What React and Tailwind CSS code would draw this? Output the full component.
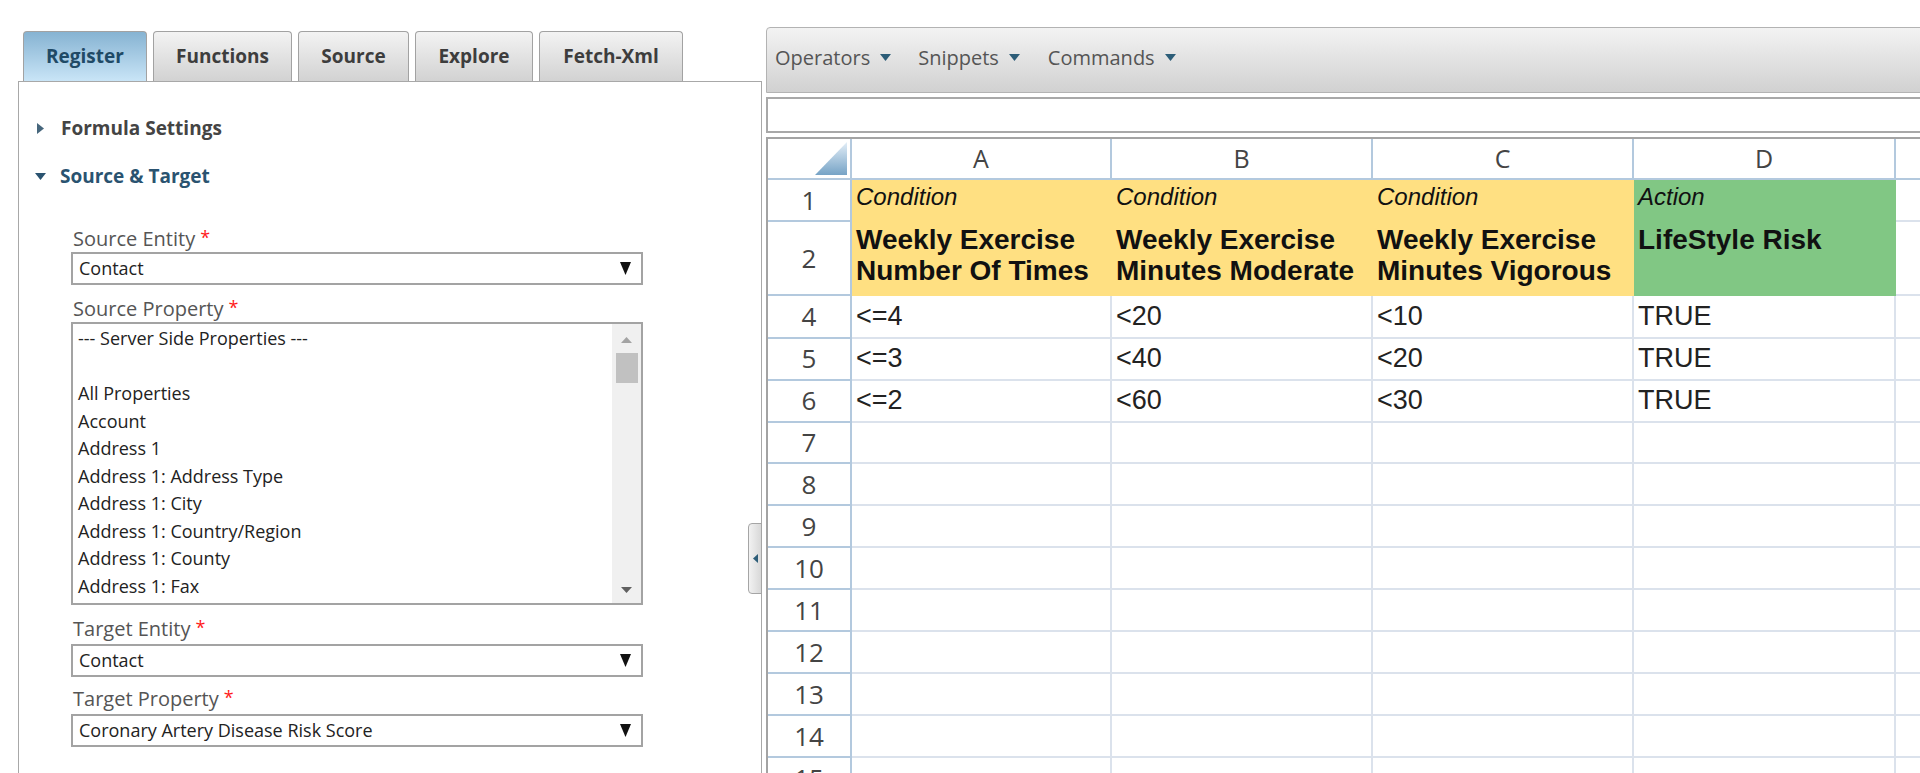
import React from "react";

const Caret = ({ className = "" }) => (
  <svg width="11" height="7" viewBox="0 0 11 7" className={className}>
    <polygon points="0,0 11,0 5.5,7" fill="#2c5d78" />
  </svg>
);

const SelectArrow = () => (
  <svg width="11" height="13" viewBox="0 0 11 13">
    <polygon points="0,0 11,0 5.5,13" fill="#111" />
  </svg>
);

const Label = ({ children, className = "" }) => (
  <div className={"h-[26px] leading-[26px] text-[20px] text-[#555] pl-[2px] " + className}>
    {children}
    <span className="text-[#ff1a1a] text-[18px] ml-[5px] align-top leading-[22px]">*</span>
  </div>
);

const Select = ({ value, className = "" }) => (
  <div
    className={
      "h-[33px] w-[572px] shrink-0 border-2 border-[#a3a3a3] bg-white flex items-center justify-between pl-[6px] pr-[10px] text-[18px] text-[#222] " +
      className
    }
  >
    <span>{value}</span>
    <SelectArrow />
  </div>
);

const listItems = [
  "--- Server Side Properties ---",
  "",
  "All Properties",
  "Account",
  "Address 1",
  "Address 1: Address Type",
  "Address 1: City",
  "Address 1: Country/Region",
  "Address 1: County",
  "Address 1: Fax",
];

const tabs = [
  { name: "Register", w: "w-[124px]", active: true },
  { name: "Functions", w: "w-[139px]" },
  { name: "Source", w: "w-[111px]" },
  { name: "Explore", w: "w-[118px]" },
  { name: "Fetch-Xml", w: "w-[144px]" },
];

const GRID = "grid grid-cols-[84px_260px_261px_261px_262px_240px]";

const Y = "bg-[#ffe082] border-[#ffe082]";
const G = "bg-[#81c784] border-[#81c784]";

const dataRows = [
  { n: 4, v: ["<=4", "<20", "<10", "TRUE"] },
  { n: 5, v: ["<=3", "<40", "<20", "TRUE"] },
  { n: 6, v: ["<=2", "<60", "<30", "TRUE"] },
  { n: 7, v: ["", "", "", ""] },
  { n: 8, v: ["", "", "", ""] },
  { n: 9, v: ["", "", "", ""] },
  { n: 10, v: ["", "", "", ""] },
  { n: 11, v: ["", "", "", ""] },
  { n: 12, v: ["", "", "", ""] },
  { n: 13, v: ["", "", "", ""] },
  { n: 14, v: ["", "", "", ""] },
  { n: 15, v: ["", "", "", ""] },
];

const RowHead = ({ n }) => (
  <div className="border-r-2 border-b-2 border-r-[#b3c9de] border-b-[#b3c9de] flex items-center justify-center text-[26px] text-[#444] font-['Open_Sans',sans-serif]">
    {n}
  </div>
);

export default function App() {
  return (
    <div className="w-[1920px] h-[773px] overflow-hidden bg-white flex font-['Open_Sans',sans-serif]">
      {/* Left column */}
      <div className="relative w-[762px] shrink-0 pl-[18px] pt-[31px] flex flex-col">
        <div className="flex gap-[6px] pl-[5px] h-[50px] shrink-0">
          {tabs.map((t) => (
            <div
              key={t.name}
              className={
                "h-[50px] rounded-t-[4px] border border-b-0 border-[#a2a2a2] flex items-center justify-center text-[19px] font-bold " +
                t.w +
                " " +
                (t.active
                  ? "bg-gradient-to-b from-[#86b3d2] to-[#c9e5f7] text-[#1f4a66]"
                  : "bg-gradient-to-b from-[#f3f3f3] to-[#d2d2d2] text-[#3d3d3d]")
              }
            >
              {t.name}
            </div>
          ))}
        </div>
        <div className="flex-1 border-l border-t border-r border-[#a8a8a8] pt-[32px]">
          <div className="flex items-center h-[28px] pl-[18px]">
            <svg width="7" height="11" viewBox="0 0 7 11" className="mr-[17px]">
              <polygon points="0,0 7,5.5 0,11" fill="#46667c" />
            </svg>
            <span className="text-[19px] font-bold text-[#444]">Formula Settings</span>
          </div>
          <div className="flex items-center h-[28px] pl-[16px] mt-[20px]">
            <svg width="11" height="7" viewBox="0 0 11 7" className="mr-[14px]">
              <polygon points="0,0 11,0 5.5,7" fill="#2a5370" />
            </svg>
            <span className="text-[19px] font-bold text-[#2a5370]">Source &amp; Target</span>
          </div>

          <div className="pl-[52px] mt-[36px] flex flex-col">
            <Label>Source Entity</Label>
            <Select value="Contact" />
            <Label className="mt-[11px]">Source Property</Label>
            <div className="h-[283px] w-[572px] shrink-0 border-2 border-[#a3a3a3] flex">
              <div className="flex-1 pl-[5px] pt-[1px] text-[18px] text-[#222] leading-[27.5px]">
                {listItems.map((it, i) => (
                  <div key={i} className="h-[27.5px] whitespace-nowrap">
                    {it}
                  </div>
                ))}
              </div>
              <div className="w-[29px] bg-[#f0f0f0] flex flex-col items-center pt-[13px] pb-[10px]">
                <svg width="11" height="6" viewBox="0 0 11 6">
                  <polygon points="0,6 11,6 5.5,0" fill="#a3a3a3" />
                </svg>
                <div className="w-[22px] h-[30px] bg-[#c1c1c1] mt-[10px]" />
                <div className="flex-1" />
                <svg width="11" height="6" viewBox="0 0 11 6">
                  <polygon points="0,0 11,0 5.5,6" fill="#606060" />
                </svg>
              </div>
            </div>
            <Label className="mt-[11px] mb-[2px]">Target Entity</Label>
            <Select value="Contact" />
            <Label className="mt-[9px] mb-[2px]">Target Property</Label>
            <Select value="Coronary Artery Disease Risk Score" />
          </div>
        </div>

        {/* collapse handle */}
        <div className="absolute left-[748px] top-[523px] w-[14px] h-[71px] rounded-l-[4px] border border-[#a5a5a5] bg-gradient-to-r from-[#f2f2f2] to-[#d8d8d8] flex items-center justify-center">
          <svg width="5" height="9" viewBox="0 0 5 9">
            <polygon points="5,0 5,9 0,4.5" fill="#2c5d78" />
          </svg>
        </div>
      </div>

      {/* Right column */}
      <div className="w-[1200px] shrink-0 ml-[4px] pt-[27px] flex flex-col">
        <div className="h-[66px] shrink-0 rounded-tl-[4px] border border-[#b3b3b3] bg-gradient-to-b from-[#f3f3f3] to-[#d1d1d1] flex items-center pl-[8px] pb-[5px] text-[20px] text-[#555]">
          <span>Operators</span>
          <Caret className="ml-[10px]" />
          <span className="ml-[27px]">Snippets</span>
          <Caret className="ml-[10px]" />
          <span className="ml-[28px]">Commands</span>
          <Caret className="ml-[10px]" />
        </div>
        <div className="h-[36px] shrink-0 mt-[4px] border-2 border-[#a8a8a8] bg-white" />

        <div className="shrink-0 mt-[4px] border-l-2 border-t-2 border-[#a3a3a3] font-['Liberation_Sans',Arial,sans-serif]">
          {/* header */}
          <div className={GRID + " h-[41px]"}>
            <div className="relative border-r-2 border-b-2 border-[#b3c9de]">
              <svg
                width="32"
                height="33"
                viewBox="0 0 32 33"
                className="absolute right-[3px] bottom-[3px]"
              >
                <defs>
                  <linearGradient id="cg" x1="0" y1="0" x2="0" y2="1">
                    <stop offset="0" stopColor="#e3eef7" />
                    <stop offset="1" stopColor="#76a3c6" />
                  </linearGradient>
                </defs>
                <polygon points="32,0 32,33 0,33" fill="url(#cg)" />
              </svg>
            </div>
            {["A", "B", "C", "D", ""].map((c, i) => (
              <div
                key={i}
                className="border-r-2 border-b-2 border-[#b3c9de] flex items-center justify-center text-[25px] text-[#444] font-['Open_Sans',sans-serif]"
              >
                {c}
              </div>
            ))}
          </div>

          {/* row 1 */}
          <div className={GRID + " h-[42px]"}>
            <RowHead n={1} />
            {["Condition", "Condition", "Condition"].map((t, i) => (
              <div key={i} className={"border-r-2 border-b-2 pl-[4px] pt-[3px] italic text-[24px] leading-[28px] text-[#111] " + Y}>
                {t}
              </div>
            ))}
            <div className={"border-r-2 border-b-2 pl-[4px] pt-[3px] italic text-[24px] leading-[28px] text-[#111] " + G}>
              Action
            </div>
            <div className="border-r-2 border-b-2 border-[#dbe2ec]" />
          </div>

          {/* row 2 */}
          <div className={GRID + " h-[74px]"}>
            <RowHead n={2} />
            {[
              ["Weekly Exercise", "Number Of Times"],
              ["Weekly Exercise", "Minutes Moderate"],
              ["Weekly Exercise", "Minutes Vigorous"],
            ].map((t, i) => (
              <div key={i} className={"border-r-2 border-b-2 pl-[4px] pt-[2px] font-bold text-[28px] leading-[31px] text-[#111] whitespace-nowrap " + Y}>
                <div>{t[0]}</div>
                <div>{t[1]}</div>
              </div>
            ))}
            <div className={"border-r-2 border-b-2 pl-[4px] pt-[2px] font-bold text-[28px] leading-[31px] text-[#111] " + G}>
              LifeStyle Risk
            </div>
            <div className="border-r-2 border-b-2 border-[#dbe2ec]" />
          </div>

          {dataRows.map((r) => (
            <div key={r.n} className={GRID + " h-[42px]"}>
              <RowHead n={r.n} />
              {r.v.map((v, i) => (
                <div
                  key={i}
                  className="border-r-2 border-b-2 border-[#dbe2ec] pl-[4px] flex items-center text-[27px] text-[#222]"
                >
                  {v}
                </div>
              ))}
              <div className="border-r-2 border-b-2 border-[#dbe2ec]" />
            </div>
          ))}
        </div>
      </div>
    </div>
  );
}
